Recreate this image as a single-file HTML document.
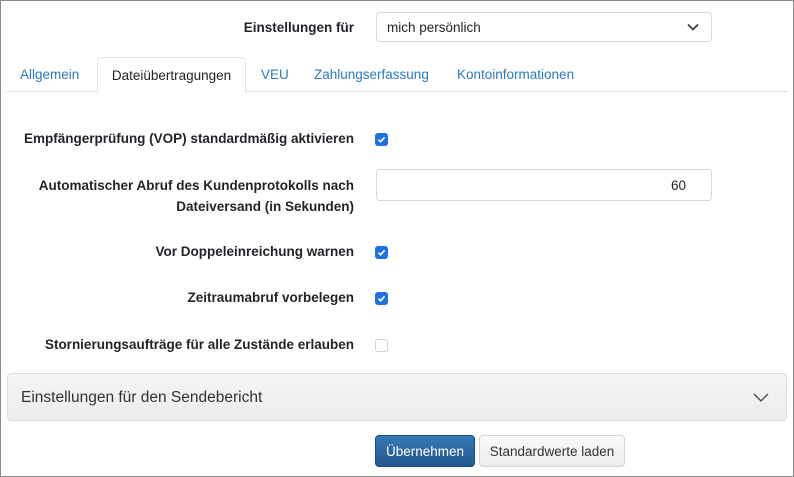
<!DOCTYPE html>
<html><head><meta charset="utf-8"><style>
*{box-sizing:border-box}
body{margin:0;width:794px;height:477px;overflow:hidden;font-family:"Liberation Sans",sans-serif;font-size:13px;color:#212529;background:#fff}
.frame{position:absolute;left:0;top:0;width:794px;height:477px;border:1px solid #8a8a8a}
.a{position:absolute}
.lbl{position:absolute;right:440px;text-align:right;font-weight:bold;font-size:13.5px;line-height:21px;white-space:nowrap}
.cb{position:absolute;left:375px;width:13px;height:13px;border-radius:3px;background:#1f6fe5}
.cb svg{position:absolute;left:0;top:0}
.cbe{position:absolute;left:375px;width:13px;height:13px;border-radius:3px;border:1px solid #d0d4d8;background:#fff}
.tab{position:absolute;top:57px;height:35px;line-height:36px;color:#2d7ac0;font-size:13.5px}
</style></head><body>
<div class="frame"></div>
<div class="lbl" style="top:17px">Einstellungen für</div>
<div class="a" style="left:376px;top:12px;width:336px;height:30px;border:1px solid #d6d9dc;border-radius:4px;padding-left:10px;line-height:30px;font-size:13.5px">mich persönlich
<svg class="a" style="right:12px;top:10px" width="12" height="8" viewBox="0 0 12 8"><path d="M1 1.5L6 6.5L11 1.5" fill="none" stroke="#333" stroke-width="1.6"/></svg></div>
<div class="a" style="left:6px;top:91px;width:782px;height:1px;background:#dee2e6"></div>
<div class="tab" style="left:20px">Allgemein</div>
<div class="tab" style="left:97px;width:149px;border:1px solid #dee2e6;border-bottom:1px solid #fff;border-radius:5px 5px 0 0;background:#fff;color:#212529;text-align:center;height:36px">Dateiübertragungen</div>
<div class="tab" style="left:261px">VEU</div>
<div class="tab" style="left:314px">Zahlungserfassung</div>
<div class="tab" style="left:457px">Kontoinformationen</div>

<div class="lbl" style="top:128px">Empfängerprüfung (VOP) standardmäßig aktivieren</div>
<div class="cb" style="top:133px"><svg width="13" height="13" viewBox="0 0 13 13"><path d="M3.5 6.8L5.6 8.8L9.6 4.3" fill="none" stroke="#fff" stroke-width="1.7"/></svg></div>

<div class="lbl" style="top:175px">Automatischer Abruf des Kundenprotokolls nach<br>Dateiversand (in Sekunden)</div>
<div class="a" style="left:376px;top:169px;width:336px;height:32px;border:1px solid #d6d9dc;border-radius:4px;text-align:right;padding-right:25px;line-height:31px;font-size:13.5px">60</div>

<div class="lbl" style="top:241px">Vor Doppeleinreichung warnen</div>
<div class="cb" style="top:246px"><svg width="13" height="13" viewBox="0 0 13 13"><path d="M3.5 6.8L5.6 8.8L9.6 4.3" fill="none" stroke="#fff" stroke-width="1.7"/></svg></div>

<div class="lbl" style="top:287px">Zeitraumabruf vorbelegen</div>
<div class="cb" style="top:292px"><svg width="13" height="13" viewBox="0 0 13 13"><path d="M3.5 6.8L5.6 8.8L9.6 4.3" fill="none" stroke="#fff" stroke-width="1.7"/></svg></div>

<div class="lbl" style="top:334px">Stornierungsaufträge für alle Zustände erlauben</div>
<div class="cbe" style="top:339px"></div>

<div class="a" style="left:7px;top:373px;width:780px;height:48px;border:1px solid #dcdcdc;border-radius:4px;background:linear-gradient(#f5f5f5,#ececec);padding-left:13px;line-height:48px;font-size:15.5px;color:#333">Einstellungen für den Sendebericht
<svg class="a" style="right:17px;top:19px" width="16" height="9" viewBox="0 0 16 9"><path d="M1 1L8 8L15 1" fill="none" stroke="#444" stroke-width="1.3"/></svg></div>

<div class="a" style="left:375px;top:435px;width:100px;height:32px;border-radius:4px;background:linear-gradient(#3779b8,#24578f);border:1px solid #1f4d80;color:#fff;text-align:center;line-height:32px;font-size:13.5px">Übernehmen</div>
<div class="a" style="left:479px;top:435px;width:146px;height:32px;border-radius:4px;background:linear-gradient(#fafafa,#ececec);border:1px solid #d6d6d6;color:#333;text-align:center;line-height:32px;font-size:13.5px">Standardwerte laden</div>
</body></html>
